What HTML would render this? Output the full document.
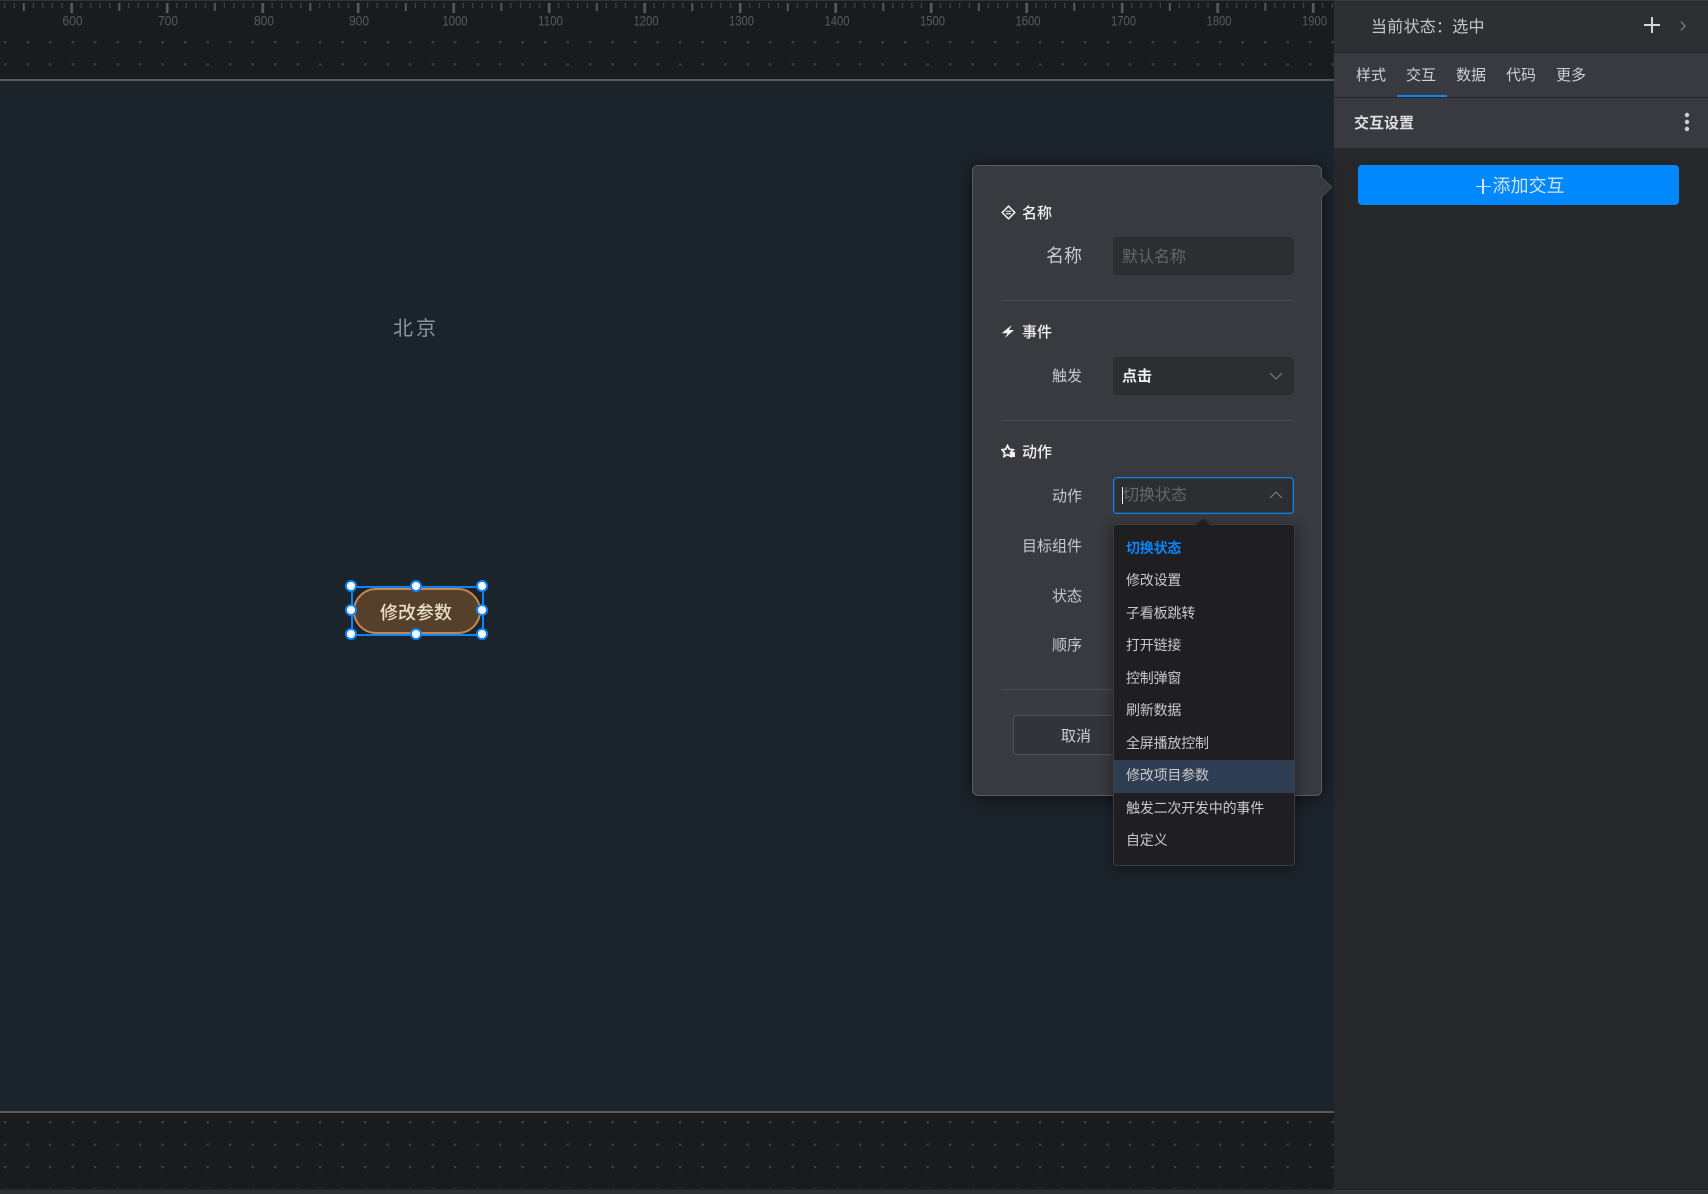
<!DOCTYPE html>
<html lang="zh-CN">
<head>
<meta charset="utf-8">
<title>交互设置</title>
<style>
html,body{margin:0;padding:0;width:1708px;height:1194px;overflow:hidden;background:#1b232b}
body{position:relative;font-family:"Liberation Sans","Noto Sans CJK SC",sans-serif;font-size:15px;color:#ccc}
.a,.t{position:absolute;white-space:nowrap}
.t{line-height:24px;height:24px}
.r{text-align:right}
.lbl{color:#c8c9cc;font-size:15px;right:626px}
.sec{color:#f2f2f2;font-weight:500;font-size:15px;left:1022px}
.item{left:1126px;font-size:14px;color:#c9c9cb;letter-spacing:-.2px}
.tab{font-size:15px;color:#d0d1d4;top:64px}
.h{position:absolute;width:8px;height:8px;border:2.5px solid #0a84ff;border-radius:50%;background:#fff}
</style>
</head>
<body>

<!-- top ruler strip -->
<svg class="a" style="left:0;top:0" width="1334" height="81" viewBox="0 0 1334 81">
<defs>
<pattern id="tk" x="-24.2" y="0" width="95.5" height="20" patternUnits="userSpaceOnUse">
<rect x="-0.9" y="3" width="2.6" height="10" fill="#5b5b5e"/>
<rect x="94.6" y="3" width="2.6" height="10" fill="#5b5b5e"/>
<rect x="47" y="3" width="2" height="8" fill="#57575a"/>
<rect x="9.3" y="3" width="1" height="5" fill="#4a4a4d"/>
<rect x="18.9" y="3" width="1" height="5" fill="#4a4a4d"/>
<rect x="28.4" y="3" width="1" height="5" fill="#4a4a4d"/>
<rect x="38" y="3" width="1" height="5" fill="#4a4a4d"/>
<rect x="57" y="3" width="1" height="5" fill="#4a4a4d"/>
<rect x="66.6" y="3" width="1" height="5" fill="#4a4a4d"/>
<rect x="76.1" y="3" width="1" height="5" fill="#4a4a4d"/>
<rect x="85.7" y="3" width="1" height="5" fill="#4a4a4d"/>
</pattern>
<pattern id="dt" x="4" y="41" width="22.5" height="22.2" patternUnits="userSpaceOnUse">
<rect x="0" y="0" width="2.4" height="2.4" fill="#3f4042"/>
</pattern>
<pattern id="db" x="4" y="1121" width="22.5" height="22.5" patternUnits="userSpaceOnUse">
<rect x="0" y="0" width="2.4" height="2.4" fill="#3f4042"/>
</pattern>
</defs>
<rect width="1334" height="81" fill="#1a1b1d"/>
<rect width="1334" height="1" fill="#333438"/>
<rect y="0" width="1334" height="20" fill="url(#tk)"/>
<rect y="38" width="1334" height="40" fill="url(#dt)"/>
<rect y="79" width="1334" height="2" fill="#5a5b5e"/>
<g font-family="'Liberation Sans',sans-serif" font-size="14" fill="#5a5a5d" text-anchor="middle" lengthAdjust="spacingAndGlyphs">
<text x="72.5" y="25.5" textLength="20" lengthAdjust="spacingAndGlyphs">600</text><text x="168" y="25.5" textLength="20" lengthAdjust="spacingAndGlyphs">700</text><text x="264" y="25.5" textLength="20" lengthAdjust="spacingAndGlyphs">800</text><text x="359" y="25.5" textLength="20" lengthAdjust="spacingAndGlyphs">900</text>
<text x="455" y="25.5" textLength="25" lengthAdjust="spacingAndGlyphs">1000</text><text x="550.500" y="25.5" textLength="25" lengthAdjust="spacingAndGlyphs">1100</text><text x="646" y="25.5" textLength="25" lengthAdjust="spacingAndGlyphs">1200</text><text x="741.500" y="25.5" textLength="25" lengthAdjust="spacingAndGlyphs">1300</text>
<text x="837" y="25.5" textLength="25" lengthAdjust="spacingAndGlyphs">1400</text><text x="932.500" y="25.5" textLength="25" lengthAdjust="spacingAndGlyphs">1500</text><text x="1028" y="25.5" textLength="25" lengthAdjust="spacingAndGlyphs">1600</text><text x="1123.500" y="25.5" textLength="25" lengthAdjust="spacingAndGlyphs">1700</text>
<text x="1219" y="25.5" textLength="25" lengthAdjust="spacingAndGlyphs">1800</text><text x="1314.500" y="25.5" textLength="25" lengthAdjust="spacingAndGlyphs">1900</text>
</g>
</svg>

<!-- bottom strip -->
<svg class="a" style="left:0;top:1111px" width="1334" height="83" viewBox="0 1111 1334 83">
<rect x="0" y="1111" width="1334" height="78" fill="#1a1b1d"/>
<rect x="0" y="1111" width="1334" height="2" fill="#5a5b5e"/>
<rect x="0" y="1113" width="1334" height="76" fill="url(#db)"/>
<rect x="0" y="1189" width="1334" height="1" fill="#222326"/>
<rect x="0" y="1190" width="1334" height="4" fill="#2e2f33"/>
</svg>

<!-- canvas content -->
<div class="t" style="left:393px;top:317px;font-size:20px;letter-spacing:3px;color:#8b93a1">北京</div>
<div class="a" style="left:351px;top:586px;width:129px;height:46px;border:2px solid #0a84ff"></div>
<div class="a" style="left:353px;top:588px;width:124px;height:42px;border:2px solid #c4874e;border-radius:23px;background:#563f2b;text-align:center;line-height:46px;font-size:18px;color:#e8dfc8;font-weight:500;text-indent:-2px">修改参数</div>
<div class="h" style="left:344.500px;top:579.500px"></div>
<div class="h" style="left:410px;top:579.500px"></div>
<div class="h" style="left:475.500px;top:579.500px"></div>
<div class="h" style="left:344.500px;top:603.500px"></div>
<div class="h" style="left:475.500px;top:603.500px"></div>
<div class="h" style="left:344.500px;top:627.500px"></div>
<div class="h" style="left:410px;top:627.500px"></div>
<div class="h" style="left:475.500px;top:627.500px"></div>

<!-- right panel -->
<div class="a" style="left:1334px;top:0;width:374px;height:1194px;background:#26272a"></div>
<div class="a" style="left:1334px;top:0;width:374px;height:52px;background:#2e2f33;border-top:1px solid #3a3b40;box-sizing:border-box"></div>
<div class="a" style="left:1334px;top:52px;width:374px;height:1px;background:#212225"></div>
<div class="a" style="left:1334px;top:53px;width:374px;height:44px;background:#393a40"></div>
<div class="a" style="left:1334px;top:97px;width:374px;height:1px;background:#242528"></div>
<div class="a" style="left:1334px;top:98px;width:374px;height:50px;background:#393a40"></div>
<div class="a" style="left:1334px;top:1189px;width:374px;height:1px;background:#1f2022"></div>
<div class="a" style="left:1334px;top:1190px;width:374px;height:4px;background:#333438"></div>

<div class="t" style="left:1371px;top:16px;font-size:16px;letter-spacing:.25px;color:#c4c6c9">当前状态：选中</div>
<svg class="a" style="left:1643px;top:16px" width="18" height="18" viewBox="0 0 18 18"><path d="M9 1v16M1 9h16" stroke="#d6d6d8" stroke-width="2" fill="none"/></svg>
<svg class="a" style="left:1679px;top:20px" width="8" height="12" viewBox="0 0 8 12"><path d="M2 1.500l4 4.500-4 4.500" stroke="#85868a" stroke-width="1.200" fill="none"/></svg>

<div class="t tab" style="left:1356px">样式</div>
<div class="t tab" style="left:1406px">交互</div>
<div class="t tab" style="left:1456px">数据</div>
<div class="t tab" style="left:1506px">代码</div>
<div class="t tab" style="left:1556px">更多</div>
<div class="a" style="left:1397px;top:95px;width:50px;height:2px;background:#0a84ff"></div>

<div class="t" style="left:1354px;top:112px;font-size:15px;font-weight:700;color:#dfdfe1">交互设置</div>
<svg class="a" style="left:1682.500px;top:112px" width="8" height="20" viewBox="0 0 8 20"><circle cx="4" cy="3" r="2.200" fill="#cfcfd2"/><circle cx="4" cy="10" r="2.200" fill="#cfcfd2"/><circle cx="4" cy="17" r="2.200" fill="#cfcfd2"/></svg>

<div class="a" style="left:1358px;top:165px;width:321px;height:40px;background:#0088ff;border-radius:4px;text-align:center;line-height:42px;font-size:18px;color:#cfe3f7;text-indent:3px">
<span style="display:inline-block;width:15px;height:15px;vertical-align:-2px;margin-right:2px;position:relative"><i style="position:absolute;left:0;top:6.500px;width:15px;height:1.500px;background:#cfe3f7"></i><i style="position:absolute;left:6.500px;top:0;width:1.500px;height:15px;background:#cfe3f7"></i></span>添加交互</div>

<!-- popover -->
<div class="a" style="left:972px;top:165px;width:350px;height:631px;box-sizing:border-box;background:#393a40;border:1px solid #5a5b60;border-radius:6px;box-shadow:0 2px 14px rgba(0,0,0,.55)"></div>
<svg class="a" style="left:1318px;top:174px" width="16" height="26" viewBox="0 0 16 26"><path d="M3.500 3L14 13 3.500 23" fill="#393a40" stroke="#46474c" stroke-width="1"/><rect x="2" y="3.500" width="2.500" height="19" fill="#393a40"/></svg>

<!-- 名称 -->
<svg class="a" style="left:1000.500px;top:205px" width="15" height="15" viewBox="0 0 15 15"><path d="M7.500 1.200L13.800 7.500 7.500 13.800 1.200 7.500Z" fill="none" stroke="#f2f2f2" stroke-width="1.500"/><path d="M5 6.300h5M5 8.700h5" stroke="#f2f2f2" stroke-width="1.100"/></svg>
<div class="t sec" style="top:202px">名称</div>
<div class="t r" style="right:626px;top:244px;font-size:18px;color:#c8c9cc">名称</div>
<div class="a" style="left:1113px;top:237px;width:181px;height:38px;background:#2d2e32;border-radius:4px"></div>
<div class="t" style="left:1122px;top:246px;font-size:16px;color:#66676b">默认名称</div>
<div class="a" style="left:1001px;top:300px;width:293px;height:1px;background:#4b4c51"></div>

<!-- 事件 -->
<svg class="a" style="left:1000px;top:324px" width="15" height="15" viewBox="0 0 15 15"><path d="M11.700 1L1.700 9.300H7.500L5 14 14 6H9Z" fill="#f2f2f2"/></svg>
<div class="t sec" style="top:321px">事件</div>
<div class="t lbl r" style="top:365px">触发</div>
<div class="a" style="left:1113px;top:357px;width:181px;height:38px;background:#2d2e32;border-radius:4px"></div>
<div class="t" style="left:1122px;top:365px;font-size:15px;font-weight:700;color:#f0f0f0">点击</div>
<svg class="a" style="left:1269px;top:371px" width="14" height="10" viewBox="0 0 14 10"><path d="M1 2l6 6 6-6" fill="none" stroke="#7e7f84" stroke-width="1.100"/></svg>
<div class="a" style="left:1001px;top:420px;width:293px;height:1px;background:#4b4c51"></div>

<!-- 动作 -->
<svg class="a" style="left:1000.500px;top:444px" width="15" height="15" viewBox="0 0 15 15"><path d="M6.500 1.500L8.300 5.200 12.300 5.700 9.500 8.500 10 12.500 6.500 10.600 3 12.500 3.600 8.500 1 5.700 4.800 5.200Z" fill="none" stroke="#f2f2f2" stroke-width="1.700"/><rect x="10" y="8" width="4" height="5" fill="#f2f2f2"/></svg>
<div class="t sec" style="top:441px">动作</div>
<div class="t lbl r" style="top:485px">动作</div>
<div class="a" style="left:1113px;top:477px;width:181px;height:37px;box-sizing:border-box;background:#2d2e32;border:1px solid #0a84f0;border-radius:4px;box-shadow:inset 0 0 0 1px rgba(10,132,240,.3)"></div>
<div class="t" style="left:1123px;top:484px;font-size:16px;color:#66676b">切换状态</div>
<div class="a" style="left:1122px;top:487px;width:1px;height:17px;background:#f0f0f0"></div>
<svg class="a" style="left:1269px;top:490px" width="14" height="10" viewBox="0 0 14 10"><path d="M1 8l6-6 6 6" fill="none" stroke="#7e7f84" stroke-width="1.100"/></svg>
<div class="t lbl r" style="top:535px">目标组件</div>
<div class="t lbl r" style="top:585px">状态</div>
<div class="t lbl r" style="top:634px">顺序</div>

<div class="a" style="left:1001px;top:689px;width:293px;height:1px;background:#4b4c51"></div>
<div class="a" style="left:1013px;top:715px;width:130px;height:40px;box-sizing:border-box;background:#333439;border:1px solid #505156;border-radius:4px"></div>
<div class="t" style="left:1061px;top:725px;font-size:15px;color:#cfd0d2">取消</div>

<!-- dropdown -->
<div class="a" style="left:1113px;top:524px;width:182px;height:342px;box-sizing:border-box;background:#1f1f22;border:1px solid #3c3d41;border-radius:4px;box-shadow:0 2px 12px rgba(0,0,0,.45)"></div>
<svg class="a" style="left:1194px;top:517px" width="18" height="9" viewBox="0 0 18 9"><path d="M1 8.500L9 1l8 7.500Z" fill="#1f1f22" stroke="#2f3034" stroke-width="1"/><rect x="1" y="8" width="16" height="1" fill="#1f1f22"/></svg>
<div class="a" style="left:1114px;top:760px;width:180px;height:33px;background:#2f3d52"></div>
<div class="t item" style="top:536px;color:#0a84ff;font-weight:700">切换状态</div>
<div class="t item" style="top:568px">修改设置</div>
<div class="t item" style="top:601px">子看板跳转</div>
<div class="t item" style="top:633px">打开链接</div>
<div class="t item" style="top:666px">控制弹窗</div>
<div class="t item" style="top:698px">刷新数据</div>
<div class="t item" style="top:731px">全屏播放控制</div>
<div class="t item" style="top:763px">修改项目参数</div>
<div class="t item" style="top:796px">触发二次开发中的事件</div>
<div class="t item" style="top:828px">自定义</div>

</body>
</html>
